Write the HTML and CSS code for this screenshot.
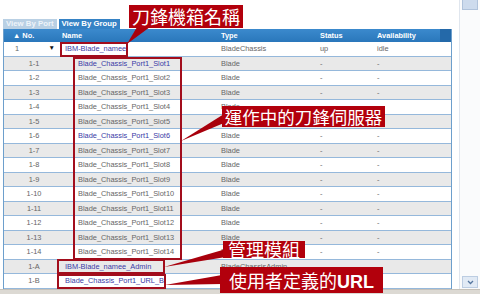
FILE: index.html
```html
<!DOCTYPE html>
<html lang="zh-Hant">
<head>
  <meta charset="UTF-8">
  <meta name="viewport" content="width=device-width, initial-scale=1.0">
  <title>View By Group</title>
  <link rel="stylesheet" href="styles.css">
</head>
<body>
  <div class="window">
    <div class="viewport">
      <div class="content">
        <div class="tabs">
          <span class="tab">View By Port</span>
          <span class="tab active">View By Group</span>
        </div>

        <div class="grid">
          <div class="row head">
            <span class="c no">&#9650; No.</span>
            <span class="c name">Name</span>
            <span class="c">Type</span>
            <span class="c">Status</span>
            <span class="c">Availability</span>
            <span class="end"></span>
          </div>

          <div class="row parent">
            <span class="c no"><span>1</span><span class="arrow">&#9660;</span></span>
            <span class="c name link">IBM-Blade_namee</span>
            <span class="c">BladeChassis</span>
            <span class="c">up</span>
            <span class="c">idle</span>
          </div>

          <div class="row"><span class="c no">1-1</span><span class="c name child link">Blade_Chassis_Port1_Slot1</span><span class="c">Blade</span><span class="c">-</span><span class="c">-</span></div>
          <div class="row"><span class="c no">1-2</span><span class="c name child">Blade_Chassis_Port1_Slot2</span><span class="c">Blade</span><span class="c">-</span><span class="c">-</span></div>
          <div class="row"><span class="c no">1-3</span><span class="c name child">Blade_Chassis_Port1_Slot3</span><span class="c">Blade</span><span class="c">-</span><span class="c">-</span></div>
          <div class="row"><span class="c no">1-4</span><span class="c name child">Blade_Chassis_Port1_Slot4</span><span class="c">Blade</span><span class="c">-</span><span class="c">-</span></div>
          <div class="row"><span class="c no">1-5</span><span class="c name child">Blade_Chassis_Port1_Slot5</span><span class="c">Blade</span><span class="c">-</span><span class="c">-</span></div>
          <div class="row"><span class="c no">1-6</span><span class="c name child link">Blade_Chassis_Port1_Slot6</span><span class="c">Blade</span><span class="c">-</span><span class="c">-</span></div>
          <div class="row"><span class="c no">1-7</span><span class="c name child">Blade_Chassis_Port1_Slot7</span><span class="c">Blade</span><span class="c">-</span><span class="c">-</span></div>
          <div class="row"><span class="c no">1-8</span><span class="c name child">Blade_Chassis_Port1_Slot8</span><span class="c">Blade</span><span class="c">-</span><span class="c">-</span></div>
          <div class="row"><span class="c no">1-9</span><span class="c name child">Blade_Chassis_Port1_Slot9</span><span class="c">Blade</span><span class="c">-</span><span class="c">-</span></div>
          <div class="row"><span class="c no">1-10</span><span class="c name child">Blade_Chassis_Port1_Slot10</span><span class="c">Blade</span><span class="c">-</span><span class="c">-</span></div>
          <div class="row"><span class="c no">1-11</span><span class="c name child">Blade_Chassis_Port1_Slot11</span><span class="c">Blade</span><span class="c">-</span><span class="c">-</span></div>
          <div class="row"><span class="c no">1-12</span><span class="c name child">Blade_Chassis_Port1_Slot12</span><span class="c">Blade</span><span class="c">-</span><span class="c">-</span></div>
          <div class="row"><span class="c no">1-13</span><span class="c name child">Blade_Chassis_Port1_Slot13</span><span class="c">Blade</span><span class="c">-</span><span class="c">-</span></div>
          <div class="row"><span class="c no">1-14</span><span class="c name child">Blade_Chassis_Port1_Slot14</span><span class="c">Blade</span><span class="c">-</span><span class="c">-</span></div>
          <div class="row"><span class="c no">1-A</span><span class="c name link">IBM-Blade_namee_Admin</span><span class="c">BladeChassisAdmin</span><span class="c">-</span><span class="c">-</span></div>
          <div class="row"><span class="c no">1-B</span><span class="c name link">Blade_Chassis_Port1_URL_B</span><span class="c">URL</span><span class="c">-</span><span class="c">-</span></div>
        </div>
      </div>

      <div class="vscroll">
        <span class="thumb"></span>
        <span class="down">
          <svg width="9" height="8" viewBox="0 0 9 8"><path d="M2 3 L4.5 5.5 L7 3" fill="none" stroke="#55769f" stroke-width="1.3"/></svg>
        </span>
      </div>
    </div>
    <div class="frame-bottom"></div>

    <!-- annotations over the screenshot -->
    <div class="mark m-chassis"></div>
    <div class="mark m-slots"></div>
    <div class="mark m-admin"></div>
    <div class="mark m-url"></div>

    <svg class="pointers" width="480" height="294" viewBox="0 0 480 294">
      <polygon points="127,44 137,27 150,27"/>
      <polygon points="181,141 224,114 224,123"/>
      <polygon points="164,267 226,249 226,257"/>
      <polygon points="165,285 222,275 222,284"/>
    </svg>

    <div class="callout c-chassis">刀鋒機箱名稱</div>
    <div class="callout c-blades">運作中的刀鋒伺服器</div>
    <div class="callout c-admin">管理模組</div>
    <div class="callout c-url">使用者定義的<span class="latin">URL</span></div>
  </div>
</body>
</html>
```

FILE: styles.css
```css
body {
  margin: 0;
  background-color: #fff;
  font-family: "Liberation Sans", Arial, sans-serif;
}

.window {
  position: relative;
  width: 480px;
  height: 294px;
  overflow: hidden;
}

.viewport {
  display: flex;
  height: 289px;
}

.content {
  flex: 1;
  padding: 19px 0 0 3px;
  overflow: hidden;
}

/* tabs */
.tabs {
  display: flex;
  gap: 2px;
  height: 10px;
}

.tab {
  font-size: 7.8px;
  font-weight: bold;
  line-height: 10px;
  padding: 0 3px;
  background-color: #b9d0e4;
  color: #eef4fa;
}

.tab.active {
  background-color: #3582c5;
  color: #fff;
}

/* table */
.grid {
  width: 447px;
  border-left: 1px solid #6d9fcc;
  border-right: 1px solid #6d9fcc;
}

.row {
  display: grid;
  grid-template-columns: 57px 157px 99px 57px 66px 1fr;
  align-items: center;
  height: 14.5px;
  box-sizing: border-box;
  border-bottom: 1px solid #95b8db;
  font-size: 7.4px;
  color: #666;
}

.row:nth-child(2n+3) {
  background-color: #e9e9e9;
}

.row.head {
  height: 13px;
  border-bottom: none;
  background: linear-gradient(#3b8acd, #2a77bb);
  color: #fff;
  font-weight: bold;
}

.head .end {
  align-self: stretch;
  background-color: #2469a9;
}

.c {
  padding-left: 3px;
  white-space: nowrap;
  overflow: hidden;
}

.no {
  text-align: center;
}

.head .no {
  text-align: left;
  padding-left: 9px;
}

.head .name {
  padding-left: 1px;
}

.parent .no {
  display: flex;
  justify-content: space-between;
  padding: 0 6px 0 11px;
}

.arrow {
  color: #111;
  font-size: 6.5px;
}

.name {
  padding-left: 4px;
}

.name.child {
  padding-left: 17px;
}

.link {
  color: #3a3aa6;
}

/* scrollbar */
.vscroll {
  width: 16px;
  border-left: 1px solid #e0e6ee;
  background-color: #fafbfc;
  display: flex;
  flex-direction: column;
  justify-content: space-between;
  padding: 0 2px 0 2px;
}

.thumb {
  height: 9px;
  background-color: #cddbed;
  border: 1px solid #b0c3db;
  border-top: none;
}

.down {
  height: 10px;
  margin-bottom: 1px;
  background-color: #e1eaf5;
  border: 1px solid #bccde2;
  display: flex;
  align-items: center;
  justify-content: center;
}

.frame-bottom {
  height: 5px;
  box-sizing: border-box;
  border-top: 1px solid #c5c1ba;
  background-color: #dcd9d3;
}

/* annotations */
.mark {
  position: absolute;
  box-sizing: border-box;
  border: 2px solid #a20d1c;
}

.m-chassis { left: 60px; top: 42px; width: 68px; height: 15px; }
.m-slots { left: 73px; top: 57px; width: 109px; height: 203px; }
.m-admin { left: 57px; top: 259px; width: 108px; height: 15px; }
.m-url { left: 57px; top: 274px; width: 109px; height: 15px; }

.pointers {
  position: absolute;
  left: 0;
  top: 0;
  fill: #a8000c;
}

.callout {
  position: absolute;
  background-color: #b2000c;
  color: #fff;
  font-family: "Noto Sans CJK TC", "Noto Sans CJK SC", sans-serif;
  font-size: 18px;
  text-align: center;
  white-space: nowrap;
}

.c-chassis { left: 129px; top: 5px; width: 114px; height: 23px; line-height: 23px; }
.c-blades { left: 222px; top: 106px; width: 163px; height: 21px; line-height: 21px; font-size: 17.5px; }
.c-admin { left: 223px; top: 241px; width: 82px; height: 17px; line-height: 17px; }
.c-url { left: 220px; top: 267px; width: 163px; height: 26px; line-height: 26px; }

.latin {
  font-family: "Liberation Sans", Arial, sans-serif;
  font-weight: bold;
}
```
